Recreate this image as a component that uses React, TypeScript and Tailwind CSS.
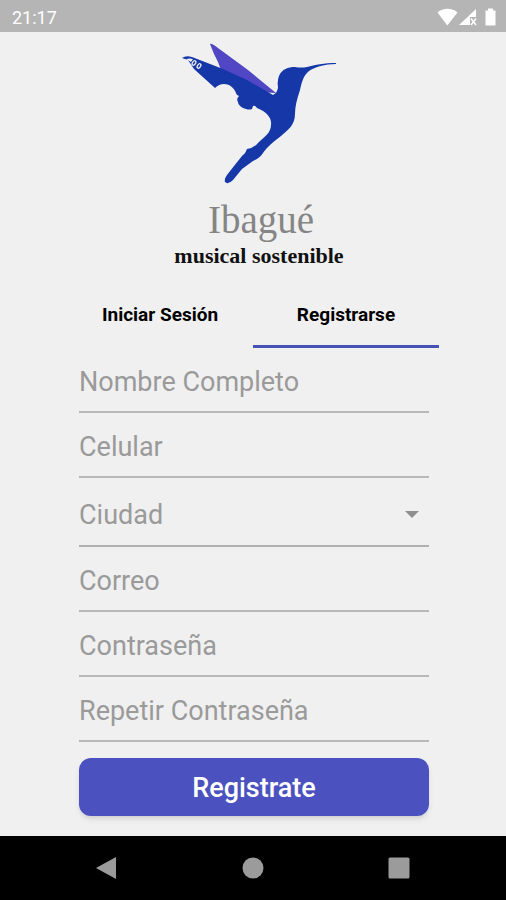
import { useState } from "react";

const fields = [
  { id: "nombre", label: "Nombre Completo", type: "text" },
  { id: "celular", label: "Celular", type: "tel" },
  { id: "ciudad", label: "Ciudad", type: "select" },
  { id: "correo", label: "Correo", type: "email" },
  { id: "clave", label: "Contraseña", type: "password" },
  { id: "repetir", label: "Repetir Contraseña", type: "password" },
];

const StatusBar = () => (
  <header className="flex h-8 items-center justify-between bg-[#b5b5b5] pt-1 pr-2 pl-3 text-white">
    <span className="text-lg">21:17</span>
    <svg viewBox="0 0 62 20" className="h-5 w-[62px]" fill="currentColor" aria-hidden="true">
      <path d="M1.500 4.500C7-.5 16-.5 21.500 4.500L11.300 17.500Z" />
      <path d="M40 1V9H34V17H23Z" />
      <path d="M35 10.500l5 6.500M40 10.500L35 17" stroke="currentColor" strokeWidth="1.500" />
      <path d="M49.500 2.500h2.500V.5h5v2h2.500v15h-10z" />
    </svg>
  </header>
);

const Bird = () => (
  <svg viewBox="0 0 156 144" className="h-36 w-[156px]" aria-hidden="true">
    <path fill="#5147c4" d="M29 2C31 1 34 4 37 6L67 28L95 51L75 50L40 28Q37 19 33 12Z" />
    <path
      fill="#1537a8"
      d="M1 16Q5 13 11 15L42 27L66 38L92 53Q97 50 97 45Q96 39 98 34C101 27 107 25 114 25Q120 26 126 25C134 23 143 21 155 21V22C144 22 134 25 128 29C122 34 121 40 119 48C116 57 114 64 114 72C114 83 107 88 100 94C92 100 87 104 82 111Q79 116 72 119L61 127L52 138Q47 143 44 140Q43 137 46 133L53 124L61 114Q65 111 66 107Q73 106 77 101C83 95 90 91 90 83C91 76 86 70 76 66Q74 63 72 64L71 67Q68 68 65 67C61 66 57 63 57 60Q55 57 58 54Q55 53 55 51C53 46 49 42 43 42Q38 42 34 46L13 27L7 18Z"
    />
    <path d="M5 17Q9 16 12 17L10 20Z" fill="#f0f0f0" />
    <ellipse cx="13" cy="21" rx="1.500" ry="2.500" transform="rotate(35 13 21)" fill="none" stroke="#f0f0f0" strokeWidth="1.300" />
    <ellipse cx="18" cy="24" rx="1.500" ry="2.500" transform="rotate(35 18 24)" fill="none" stroke="#f0f0f0" strokeWidth="1.300" />
  </svg>
);

const Logo = () => (
  <div className="flex flex-col items-center pt-2.5 pl-3">
    <Bird />
    <h1 className="mt-3.5 pl-1 font-['Liberation_Serif',serif] text-[39px] leading-10 text-[#858585]">Ibagué</h1>
    <p className="mt-0.5 font-['Liberation_Serif',serif] text-[22px] leading-7 font-bold text-[#111]">
      musical sostenible
    </p>
  </div>
);

const Field = ({ id, label, type }: { id: string; label: string; type: string }) => {
  if (type === "select") {
    return (
      <div className="flex h-[69px] items-center border-b-2 border-[#b0b0b0] pt-1.5">
        <select
          id={id}
          aria-label={label}
          defaultValue=""
          className="w-full appearance-none bg-transparent text-[27px] leading-10 text-[#9a9a9a] outline-none"
        >
          <option value="">{label}</option>
          <option value="ibague">Ibagué</option>
        </select>
        <svg viewBox="0 0 14 8" className="pointer-events-none mr-2.5 h-2 w-3.5 shrink-0" aria-hidden="true">
          <path d="M0 0h14L7 7z" fill="#8f8f8f" />
        </svg>
      </div>
    );
  }
  return (
    <div className="flex h-[65px] items-center border-b-2 border-[#b8b8b8] pt-1">
      <input
        id={id}
        type={type}
        aria-label={label}
        placeholder={label}
        className="w-full bg-transparent text-[27px] leading-10 outline-none placeholder:text-[#9a9a9a]"
      />
    </div>
  );
};

const NavBar = () => (
  <nav className="flex h-16 items-center justify-between bg-black px-[95px] text-[#9b9b9b]">
    <button type="button" aria-label="Atrás">
      <svg viewBox="0 0 24 24" className="size-6" fill="currentColor"><path d="M21 1v22L1 12z" /></svg>
    </button>
    <button type="button" aria-label="Inicio">
      <svg viewBox="0 0 24 24" className="size-6" fill="currentColor"><circle cx="12" cy="12" r="10.500" /></svg>
    </button>
    <button type="button" aria-label="Recientes">
      <svg viewBox="0 0 24 24" className="size-6" fill="currentColor"><rect x="1.500" y="1.500" width="21" height="21" rx="1.500" /></svg>
    </button>
  </nav>
);

const App = () => {
  const [tab, setTab] = useState("Registrarse");

  return (
    <div className="flex min-h-screen flex-col bg-[#f0f0f0] font-[Roboto,sans-serif]">
      <StatusBar />
      <main className="grow px-[67px]">
        <Logo />
        <div role="tablist" className="mt-3 grid grid-cols-2">
          {["Iniciar Sesión", "Registrarse"].map((name) => (
            <button
              key={name}
              type="button"
              role="tab"
              aria-selected={tab === name}
              onClick={() => setTab(name)}
              className={`h-[66px] border-b-3 pt-1 text-[19px] font-bold text-black ${
                tab === name ? "border-[#4653b5]" : "border-transparent"
              }`}
            >
              {name}
            </button>
          ))}
        </div>
        <form className="pr-2.5 pl-3" onSubmit={(e) => e.preventDefault()}>
          {fields.map((f) => (
            <Field key={f.id} {...f} />
          ))}
          <button
            type="submit"
            className="mt-4 h-[58px] w-full rounded-xl bg-[#4b52c0] pt-0.5 text-[27px] font-medium text-white shadow-md"
          >
            Registrate
          </button>
        </form>
      </main>
      <NavBar />
    </div>
  );
};

export default App;
